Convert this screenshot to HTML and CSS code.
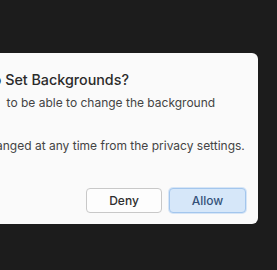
FILE: index.html
```html
<!DOCTYPE html>
<html lang="en">
<head>
    <meta charset="UTF-8">
    <meta name="viewport" content="width=device-width, initial-scale=1.0">
    <title>Set Backgrounds</title>
    <link rel="stylesheet" href="styles.css">
</head>
<body>
    <div class="dialog">
        <h2 class="dialog-title">Allow an Application to Set Backgrounds?</h2>
        <p class="dialog-body">An application’s requesting&nbsp; to be able to change the background image.</p>
        <p class="dialog-body">This permission can be changed at any time from the privacy settings.</p>
        <div class="dialog-actions">
            <button class="btn btn-deny">Deny</button>
            <button class="btn btn-allow">Allow</button>
        </div>
    </div>
</body>
</html>
```

FILE: styles.css
```css
body {
    background: #1c1c1c;
    margin: 0;
    font-family: 'Inter', 'Noto Sans', sans-serif;
    overflow: hidden;
}

/* dialog runs off the left edge of the window */
.dialog {
    width: 440px;
    margin: 53px 0 0 -182px;
    padding: 17px 12px 11px 29px;
    background: #fafafa;
    border-radius: 6px;
    box-sizing: border-box;
}

.dialog-title {
    margin: 0;
    text-indent: -2px;
    font-size: 14.3px;
    font-weight: 500;
    line-height: 20px;
    color: #2b2b2b;
}

.dialog-body {
    margin: 4px 0 0;
    font-size: 12px;
    line-height: 17px;
    color: #444;
}

.dialog-body + .dialog-body {
    margin-top: 9px;
}

.dialog-actions {
    display: flex;
    justify-content: flex-end;
    gap: 7px;
    margin-top: 34px;
}

.btn {
    width: 77px;
    height: 25px;
    border-radius: 4px;
    font-family: inherit;
    font-size: 12px;
    font-weight: 500;
    padding: 0;
}

.btn-deny {
    width: 76px;
    background: #fdfdfd;
    border: 1px solid #c8c8c8;
    color: #2e2e2e;
}

.btn-allow {
    background: #d6e7f9;
    border: 1px solid #a3c6ed;
    box-shadow: 0 0 0 1px rgba(170, 205, 242, 0.45);
    color: #34527a;
}
```
